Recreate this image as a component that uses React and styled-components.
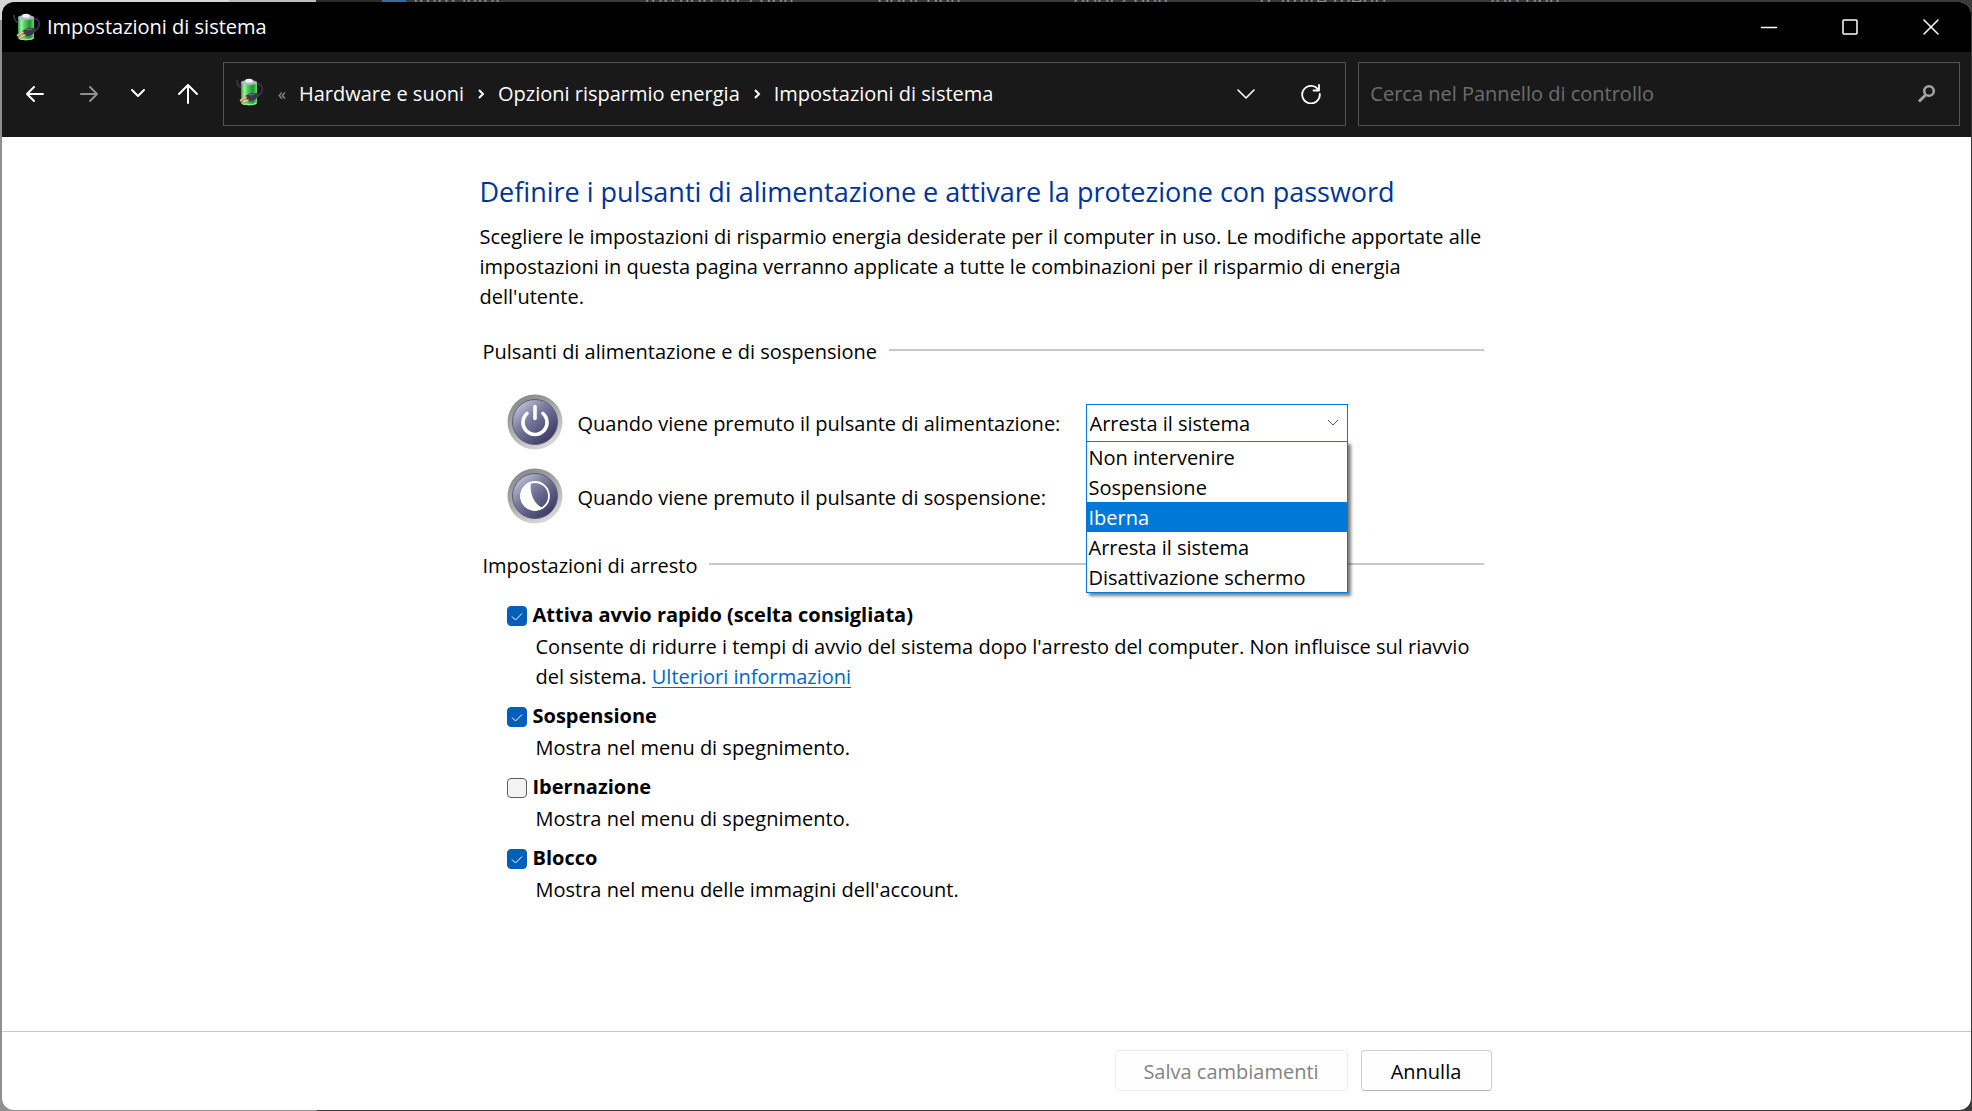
import React, { useState } from "react";
import styled, { createGlobalStyle } from "styled-components";

const GlobalStyle = createGlobalStyle`
  *, *::before, *::after { box-sizing: border-box; }
  body { margin: 0; background: #3a3a3a; }
  body, button, input, select {
    font-family: "Open Sans", "Noto Sans", sans-serif;
    font-size: 20px;
    line-height: 30px;
  }
`;

const Desktop = styled.div`
  position: relative;
  display: flex;
  min-height: 100vh;
  padding: 2px 1px 1px 2px;
  background:
    linear-gradient(90deg, #d6d6d6 229px, #bdbdbd 229px, #bdbdbd 316px, #2c2c2e 316px, #2c2c2e 382px, #2f6f9f 382px, #2f6f9f 406px, #3a3a3a 406px) top / 100% 20px no-repeat,
    linear-gradient(90deg, #8f8f8f 317px, #3a3a3a 317px);
`;

const FilesBehind = styled.div`
  position: absolute;
  top: 0;
  left: 413px;
  right: 0;
  display: grid;
  grid-template-columns: 231px 233px 196px 186px 225px 1fr;
  height: 2px;
  overflow: hidden;
  color: #8d8d8d;
  line-height: 2px;
  white-space: nowrap;
`;

const Window = styled.div`
  position: relative;
  flex: 1;
  display: flex;
  flex-direction: column;
  min-width: 0;
  overflow: hidden;
  border-radius: 12px;
  background: #fff;
  color: #000;
`;

const TitleBar = styled.header`
  display: flex;
  align-items: center;
  height: 50px;
  padding-left: 11px;
  background: #000;
  color: #fff;
`;

const WindowTitle = styled.span`
  flex: 1;
  margin-left: 6px;
`;

const PlainButton = styled.button`
  display: flex;
  align-items: center;
  justify-content: center;
  width: ${(p) => p.$width}px;
  height: 50px;
  padding: 0;
  border: 0;
  background: transparent;
  color: ${(p) => p.$color || "#fff"};
`;

const Toolbar = styled.nav`
  display: flex;
  align-items: center;
  height: 85px;
  padding: 0 11px 2px 6px;
  background: #191919;
  color: #fff;
`;

const AddressBar = styled.div`
  flex: 1108 1 0;
  display: flex;
  align-items: center;
  height: 64px;
  margin: 0 12px 0 6px;
  padding: 0 0 0 12px;
  border: 1px solid #535353;
`;

const AddressIcon = styled.span`
  display: flex;
  padding-bottom: 4px;
`;

const Crumbs = styled.div`
  flex: 1;
  display: flex;
  align-items: center;
  gap: 13px;
  margin-left: 14px;
  white-space: nowrap;
`;

const Overflow = styled.span`
  color: #9a9a9a;
  font-size: 16px;
`;

const Crumb = styled.a`
  color: #fff;
  text-decoration: none;
`;

const SearchBox = styled.label`
  flex: 566 1 0;
  display: flex;
  align-items: center;
  height: 64px;
  padding: 0 22px 0 11px;
  border: 1px solid #535353;
`;

const SearchInput = styled.input`
  flex: 1;
  min-width: 0;
  padding: 0;
  border: 0;
  outline: 0;
  background: transparent;
  color: #fff;
  &::placeholder { color: #6d6d6d; opacity: 1; }
`;

const Content = styled.main`
  flex: 1;
  width: 100%;
  max-width: 1014px;
  margin: 0 auto;
  padding: 37px 10px 36px 0;
`;

const Heading = styled.h1`
  margin: 0 0 12px;
  color: #003399;
  font-size: 27px;
  font-weight: 400;
  line-height: 36px;
`;

const Intro = styled.p`
  margin: 0;
`;

const Group = styled.section`
  margin-top: ${(p) => p.$top}px;
`;

const GroupTitle = styled.h2`
  display: flex;
  align-items: center;
  gap: 12px;
  margin: 0;
  padding-left: 3px;
  font-size: 20px;
  font-weight: 400;
  white-space: nowrap;
  &::after {
    content: "";
    flex: 1;
    height: 2px;
    margin-bottom: 4px;
    background: #c8c8c8;
  }
`;

const ButtonRows = styled.div`
  display: grid;
  gap: 18px;
  margin-top: 27px;
  padding-left: 27px;
`;

const SettingRow = styled.div`
  display: grid;
  grid-template-columns: 56px 493px 262px;
  column-gap: 15px;
  align-items: center;
  height: 56px;
`;

const SettingLabel = styled.label`
  padding-top: 4px;
`;

const ComboWrap = styled.div`
  position: relative;
  padding-top: 2px;
`;

const Combo = styled.select`
  display: block;
  appearance: none;
  width: 100%;
  height: 38px;
  padding: 2px 30px 0 3px;
  border: 1px solid #0078d7;
  border-radius: 0;
  outline: 0;
  background: #fff;
  color: #000;
`;

const ComboArrow = styled.svg`
  position: absolute;
  top: 17px;
  right: 9px;
  pointer-events: none;
`;

const Options = styled.ul`
  position: absolute;
  z-index: 2;
  top: 39px;
  left: 0;
  right: 0;
  margin: 0;
  padding: 0;
  border: 1px solid #0078d7;
  background: #fff;
  box-shadow: 3px 3px 3px rgba(0, 0, 0, 0.5);
  list-style: none;
`;

const Option = styled.li`
  height: 30px;
  padding-left: 2px;
  line-height: 32px;
  background: ${(p) => (p.$active ? "#0078d7" : "transparent")};
  color: ${(p) => (p.$active ? "#fff" : "#000")};
`;

const Checks = styled.div`
  display: grid;
  gap: 9px;
  margin-top: 19px;
  padding-left: 27px;
`;

const CheckLabel = styled.label`
  display: flex;
  align-items: center;
  gap: 6px;
  font-weight: 700;
`;

const CheckInput = styled.input`
  appearance: none;
  width: 20px;
  height: 20px;
  margin: 2px 0 0;
  border: 1px solid #5f5f5f;
  border-radius: 4px;
  background: #f3f3f3;
  &:checked { border-color: #005fb8; background: #005fb8; }
`;

const CheckBoxWrap = styled.span`
  position: relative;
  display: flex;
`;

const Tick = styled.svg`
  position: absolute;
  top: 2px;
  left: 0;
  pointer-events: none;
`;

const CheckText = styled.p`
  margin: 2px 0 0 29px;
`;

const InfoLink = styled.a`
  color: #0066cc;
  text-decoration: underline;
  text-decoration-thickness: 1px;
  text-underline-offset: 3px;
`;

const Footer = styled.footer`
  border-top: 1px solid #c8c8c8;
`;

const FooterInner = styled.div`
  display: flex;
  justify-content: flex-end;
  gap: 13px;
  width: 100%;
  max-width: 1014px;
  margin: 0 auto;
  padding: 18px 2px 19px 0;
`;

const DialogButton = styled.button`
  width: ${(p) => p.$width}px;
  height: 41px;
  padding: 2px 0 0;
  border: 1px solid #d0d0d0;
  border-bottom-color: #b8b8b8;
  border-radius: 4px;
  background: #fefefe;
  color: #000;
  &:disabled { border-color: #ececec; color: #838383; }
`;

function BatteryIcon({ id }) {
  return (
    <svg width="28" height="28" viewBox="0 0 28 28" aria-hidden="true">
      <defs>
        <linearGradient id={id} x1="0" x2="1">
          <stop offset="0" stopColor="#2f9a3c" />
          <stop offset="0.2" stopColor="#a5f2a0" />
          <stop offset="0.45" stopColor="#4cc653" />
          <stop offset="0.75" stopColor="#1c9433" />
          <stop offset="1" stopColor="#68d86a" />
        </linearGradient>
      </defs>
      <path d="M1 2c0 4 2 7 5 8M20 6c5-1 7 3 6 7-1 3-3 4-5 6" fill="none" stroke="#33334f" strokeWidth="1.8" />
      <path d="M5 4v21c0 3 16 3 16 0V4z" fill={`url(#${id})`} />
      <ellipse cx="13" cy="4.500" rx="8" ry="2.500" fill="#b4b9c2" />
      <ellipse cx="13" cy="2.800" rx="4" ry="2" fill="#f0f1f5" />
      <path d="M6 25c2 2 12 2 14 0" fill="none" stroke="#8cf08a" strokeWidth="1.500" />
      <path d="M9 18l6-3 7 0 1 2-4 5-7 2z" fill="#3a3a46" />
      <path d="M13 17l6-1" stroke="#74748a" strokeWidth="1.200" />
      <path d="M11 19l-7 4M13 22l-6 3" stroke="#b98650" strokeWidth="2.200" />
      <path d="M10 19l-6 3.500M12 22l-5 2.500" stroke="#ffe2b4" strokeWidth="1" />
    </svg>
  );
}

function RoundIcon({ id, children }) {
  return (
    <svg width="56" height="56" viewBox="0 0 56 56" aria-hidden="true">
      <defs>
        <linearGradient id={`${id}-rim`} x1="0.200" y1="0" x2="0.700" y2="1">
          <stop offset="0" stopColor="#858585" />
          <stop offset="0.500" stopColor="#adadad" />
          <stop offset="1" stopColor="#dcdcdc" />
        </linearGradient>
        <linearGradient id={`${id}-face`} x1="0.100" y1="0.100" x2="0.800" y2="0.900">
          <stop offset="0" stopColor="#c4c4d8" />
          <stop offset="0.400" stopColor="#7c7ca0" />
          <stop offset="1" stopColor="#3c3c66" />
        </linearGradient>
      </defs>
      <circle cx="28" cy="28" r="27.500" fill={`url(#${id}-rim)`} />
      <circle cx="28" cy="28" r="22.500" fill={`url(#${id}-face)`} stroke="#5c5c78" />
      {children}
    </svg>
  );
}

function Line({ size = 20, d, width = 2 }) {
  return (
    <svg width={size} height={size} viewBox="0 0 20 20" fill="none" stroke="currentColor" strokeWidth={width} strokeLinecap="round" strokeLinejoin="round" aria-hidden="true">
      <path d={d} />
    </svg>
  );
}

function Separator() {
  return (
    <svg width="8" height="12" viewBox="0 0 8 12" fill="none" stroke="#fff" strokeWidth="2" aria-hidden="true">
      <path d="M2 2l4 4-4 4" />
    </svg>
  );
}

const choices = ["Non intervenire", "Sospensione", "Iberna", "Arresta il sistema", "Disattivazione schermo"];

function PowerSetting({ id, label, icon, initial, open }) {
  const [value, setValue] = useState(initial);
  return (
    <SettingRow>
      {icon}
      <SettingLabel htmlFor={id}>{label}</SettingLabel>
      <ComboWrap>
        <Combo id={id} value={value} onChange={(e) => setValue(e.target.value)}>
          {choices.map((c) => <option key={c}>{c}</option>)}
        </Combo>
        <ComboArrow width="12" height="8" viewBox="0 0 12 8" fill="none" stroke="#555" aria-hidden="true">
          <path d="M1 1l5 5 5-5" />
        </ComboArrow>
        {open && (
          <Options role="listbox" aria-label={label}>
            {choices.map((c) => (
              <Option key={c} role="option" aria-selected={c === "Iberna"} $active={c === "Iberna"}>{c}</Option>
            ))}
          </Options>
        )}
      </ComboWrap>
    </SettingRow>
  );
}

function CheckSetting({ label, initial, children }) {
  const [on, setOn] = useState(initial);
  return (
    <div>
      <CheckLabel>
        <CheckBoxWrap>
          <CheckInput type="checkbox" checked={on} onChange={() => setOn(!on)} />
          {on && (
            <Tick width="20" height="20" viewBox="0 0 20 20" fill="none" stroke="#fff" aria-hidden="true">
              <path d="M5 10.500l3.500 3.500L15 7.500" />
            </Tick>
          )}
        </CheckBoxWrap>
        {label}
      </CheckLabel>
      <CheckText>{children}</CheckText>
    </div>
  );
}

export default function App() {
  return (
    <Desktop>
      <GlobalStyle />
      <FilesBehind aria-hidden="true">
        <span>Immagini</span>
        <span>funzionalità.png</span>
        <span>boot.png</span>
        <span>boot2.png</span>
        <span>tramite menu</span>
        <span>app.png</span>
      </FilesBehind>
      <Window>
        <TitleBar>
          <BatteryIcon id="battery-title" />
          <WindowTitle>Impostazioni di sistema</WindowTitle>
          <PlainButton $width={81} aria-label="Riduci a icona">
            <Line d="M2.500 10.500h15" width={1.5} />
          </PlainButton>
          <PlainButton $width={81} aria-label="Ingrandisci">
            <Line d="M4 3h12q1 0 1 1v12q0 1-1 1H4q-1 0-1-1V4q0-1 1-1z" width={1.5} />
          </PlainButton>
          <PlainButton $width={81} aria-label="Chiudi">
            <Line d="M3 3l14 14M17 3L3 17" width={1.5} />
          </PlainButton>
        </TitleBar>
        <Toolbar>
          <PlainButton $width={54} aria-label="Indietro">
            <Line d="M18 10H2M9 3l-7 7 7 7" />
          </PlainButton>
          <PlainButton $width={54} $color="#8f8f8f" aria-label="Avanti">
            <Line d="M2 10h16M11 3l7 7-7 7" />
          </PlainButton>
          <PlainButton $width={43} aria-label="Percorsi recenti">
            <Line d="M4 6l6 6 6-6" />
          </PlainButton>
          <PlainButton $width={58} aria-label="Su">
            <Line d="M10 19V1M1 10l9-9 9 9" />
          </PlainButton>
          <AddressBar>
            <AddressIcon>
              <BatteryIcon id="battery-address" />
            </AddressIcon>
            <Crumbs>
              <Overflow>«</Overflow>
              <Crumb href="#hardware">Hardware e suoni</Crumb>
              <Separator />
              <Crumb href="#energia">Opzioni risparmio energia</Crumb>
              <Separator />
              <Crumb href="#sistema">Impostazioni di sistema</Crumb>
            </Crumbs>
            <PlainButton $width={62} aria-label="Percorsi precedenti">
              <Line d="M2 6l8 8 8-8" width={1.6} />
            </PlainButton>
            <PlainButton $width={68} aria-label="Aggiorna">
              <Line d="M17.500 6A8.800 8.800 0 1 0 18.800 10M18 1v5.500h-5.500" width={1.8} />
            </PlainButton>
          </AddressBar>
          <SearchBox>
            <SearchInput type="search" aria-label="Cerca" placeholder="Cerca nel Pannello di controllo" />
            <svg width="20" height="20" viewBox="0 0 20 20" fill="none" stroke="#a3a3a3" aria-hidden="true">
              <circle cx="12" cy="7" r="4.800" strokeWidth="2.600" />
              <path d="M8.500 11L2 17.500" strokeWidth="3" />
            </svg>
          </SearchBox>
        </Toolbar>
        <Content>
          <Heading>Definire i pulsanti di alimentazione e attivare la protezione con password</Heading>
          <Intro>
            Scegliere le impostazioni di risparmio energia desiderate per il computer in uso. Le modifiche apportate alle impostazioni in questa pagina verranno applicate a tutte le combinazioni per il risparmio di energia dell'utente.
          </Intro>
          <Group $top={25}>
            <GroupTitle>Pulsanti di alimentazione e di sospensione</GroupTitle>
            <ButtonRows>
              <PowerSetting
                id="power-button"
                label="Quando viene premuto il pulsante di alimentazione:"
                initial="Arresta il sistema"
                open
                icon={
                  <RoundIcon id="power">
                    <path d="M20 19.500a12 12 0 1 0 16 0M28 12.500v12" fill="none" stroke="#fff" strokeWidth="3.600" strokeLinecap="round" />
                  </RoundIcon>
                }
              />
              <PowerSetting
                id="sleep-button"
                label="Quando viene premuto il pulsante di sospensione:"
                initial="Sospensione"
                icon={
                  <RoundIcon id="sleep">
                    <circle cx="28" cy="28" r="14" fill="none" stroke="#fff" strokeWidth="1.800" />
                    <path d="M24 14a14.500 14.500 0 1 0 12 26c-8-3-14-14-12-26z" fill="#fff" />
                  </RoundIcon>
                }
              />
            </ButtonRows>
          </Group>
          <Group $top={27}>
            <GroupTitle>Impostazioni di arresto</GroupTitle>
            <Checks>
              <CheckSetting label="Attiva avvio rapido (scelta consigliata)" initial>
                Consente di ridurre i tempi di avvio del sistema dopo l'arresto del computer. Non influisce sul riavvio del sistema. <InfoLink href="#informazioni">Ulteriori informazioni</InfoLink>
              </CheckSetting>
              <CheckSetting label="Sospensione" initial>Mostra nel menu di spegnimento.</CheckSetting>
              <CheckSetting label="Ibernazione" initial={false}>Mostra nel menu di spegnimento.</CheckSetting>
              <CheckSetting label="Blocco" initial>Mostra nel menu delle immagini dell'account.</CheckSetting>
            </Checks>
          </Group>
        </Content>
        <Footer>
          <FooterInner>
            <DialogButton $width={233} disabled>Salva cambiamenti</DialogButton>
            <DialogButton $width={131}>Annulla</DialogButton>
          </FooterInner>
        </Footer>
      </Window>
    </Desktop>
  );
}
